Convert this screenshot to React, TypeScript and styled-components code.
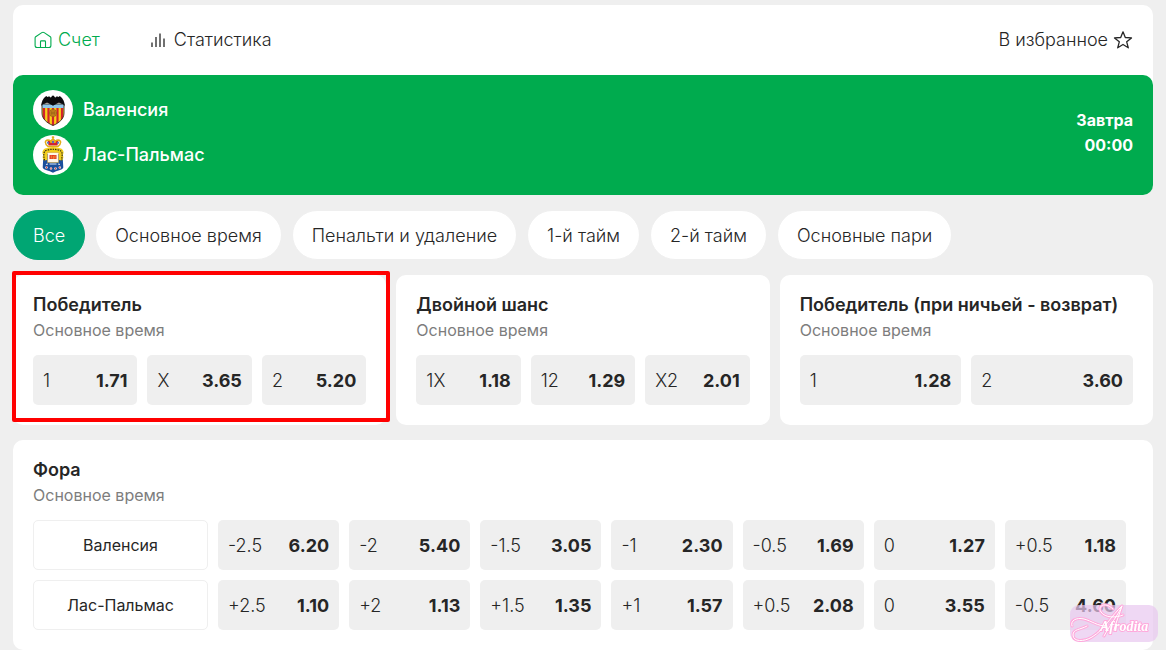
import React from "react";
import styled, { createGlobalStyle, css } from "styled-components";

const GlobalStyle = createGlobalStyle`
  *, *::before, *::after { box-sizing: border-box; }
  body {
    margin: 0;
    background: #efefef;
    color: #262626;
    font-family: Inter, "Liberation Sans", sans-serif;
    font-size: 18px;
    font-weight: 300;
    line-height: 20px;
  }
  button { font: inherit; color: inherit; border: 0; cursor: pointer; }
  h2, p { margin: 0; }
`;

const Page = styled.main`
  display: flex;
  flex-direction: column;
  gap: 15px;
  padding: 5px 13px 0;
`;

const EventPanel = styled.section`
  background: #fff;
  border-radius: 10px;
`;

const EventNav = styled.nav`
  display: flex;
  align-items: center;
  gap: 50px;
  height: 70px;
  padding: 0 20px;
`;

const NavLink = styled.a<{ $active?: boolean }>`
  display: flex;
  align-items: center;
  gap: 6px;
  color: ${(p) => (p.$active ? "#00ab4e" : "inherit")};
  text-decoration: none;
`;

const FavouriteButton = styled.button`
  display: flex;
  align-items: center;
  gap: 5px;
  margin-left: auto;
  padding: 0;
  background: none;
`;

const Scoreboard = styled.div`
  display: flex;
  align-items: center;
  justify-content: space-between;
  padding: 15px 20px 20px;
  border-radius: 10px;
  background: #00ab4e;
  color: #fff;
`;

const Teams = styled.div`
  display: flex;
  flex-direction: column;
  gap: 5px;
`;

const Team = styled.div`
  display: flex;
  align-items: center;
  gap: 10px;
  font-weight: 500;
`;

const Crest = styled.svg`
  width: 40px;
  height: 40px;
  border-radius: 50%;
  background: #fff;
`;

const StartTime = styled.time`
  display: flex;
  flex-direction: column;
  font-size: 16px;
  font-weight: 700;
  line-height: 25px;
  text-align: right;
`;

const Filters = styled.div`
  display: flex;
  gap: 10px;
`;

const FilterButton = styled.button<{ $active?: boolean }>`
  height: 50px;
  padding: 2px 19px 0;
  border: 1px solid ${(p) => (p.$active ? "#00a673" : "#efefef")};
  border-radius: 25px;
  background: ${(p) => (p.$active ? "#00a673" : "#fff")};
  color: ${(p) => (p.$active ? "#fff" : "inherit")};
  white-space: nowrap;
`;

const MarketGrid = styled.div`
  display: grid;
  grid-template-columns: repeat(3, minmax(0, 1fr));
  gap: 10px;
`;

const Market = styled.section<{ $highlighted?: boolean }>`
  position: relative;
  padding: 20px;
  border-radius: 10px;
  background: #fff;

  ${(p) =>
    p.$highlighted &&
    css`
      &::after {
        content: "";
        position: absolute;
        inset: -4px -4px 3px -1px;
        border: 4px solid #ff0000;
        border-radius: 2px;
        pointer-events: none;
      }
    `}
`;

const MarketTitle = styled.h2`
  font-size: 18px;
  font-weight: 600;
  line-height: 20px;
`;

const MarketPeriod = styled.p`
  margin: 5px 0 15px;
  color: #7d7d7d;
  font-size: 16px;
  font-weight: 400;
`;

const Odds = styled.div`
  display: grid;
  grid-auto-flow: column;
  grid-auto-columns: minmax(0, 1fr);
  gap: 10px;
`;

const OddButton = styled.button`
  display: flex;
  align-items: center;
  justify-content: space-between;
  height: 50px;
  padding: 2px 10px 0;
  border-radius: 5px;
  background: #efefef;
`;

const OddValue = styled.span`
  font-weight: 700;
`;

const HandicapRows = styled.div`
  display: flex;
  flex-direction: column;
  gap: 10px;
  padding-right: 7px;
`;

const HandicapRow = styled.div`
  display: grid;
  grid-template-columns: 175px 1fr;
  gap: 10px;
`;

const HandicapTeam = styled.div`
  display: flex;
  align-items: center;
  justify-content: center;
  border: 1px solid #efefef;
  border-radius: 5px;
  font-size: 16px;
  font-weight: 400;
`;

const Watermark = styled.div`
  position: fixed;
  right: 8px;
  bottom: 8px;
  width: 88px;
  height: 37px;
  border-radius: 9px;
  background: rgba(232, 200, 240, 0.7);
  pointer-events: none;

  svg {
    display: block;
    overflow: visible;
  }
`;

type Odd = [label: string, value: string];

const filters = ["Все", "Основное время", "Пенальти и удаление", "1-й тайм", "2-й тайм", "Основные пари"];

const markets: { title: string; odds: Odd[]; highlighted?: boolean }[] = [
  { title: "Победитель", odds: [["1", "1.71"], ["X", "3.65"], ["2", "5.20"]], highlighted: true },
  { title: "Двойной шанс", odds: [["1X", "1.18"], ["12", "1.29"], ["X2", "2.01"]] },
  { title: "Победитель (при ничьей - возврат)", odds: [["1", "1.28"], ["2", "3.60"]] },
];

const handicaps: { team: string; odds: Odd[] }[] = [
  {
    team: "Валенсия",
    odds: [["-2.5", "6.20"], ["-2", "5.40"], ["-1.5", "3.05"], ["-1", "2.30"], ["-0.5", "1.69"], ["0", "1.27"], ["+0.5", "1.18"]],
  },
  {
    team: "Лас-Пальмас",
    odds: [["+2.5", "1.10"], ["+2", "1.13"], ["+1.5", "1.35"], ["+1", "1.57"], ["+0.5", "2.08"], ["0", "3.55"], ["-0.5", "4.60"]],
  },
];

const HomeIcon = () => (
  <svg width="19" height="18" viewBox="-1 0 19 18" fill="none" stroke="currentColor" strokeWidth="1.1" strokeLinejoin="round" aria-hidden="true">
    <path d="M1.7 5.700 7.800 1.600a2.200 2.200 0 0 1 2.400 0l6.100 4.100q.6.500.6 1.300v7.500a2 2 0 0 1-2 2H3.100a2 2 0 0 1-2-2V7q0-.8.6-1.300Z" />
    <path d="M6.500 16.400v-5.700q0-.8.8-.8h3.400q.8 0 .8.8v5.700" />
  </svg>
);

const StatsIcon = () => (
  <svg width="18" height="18" viewBox="0 0 18 18" fill="none" stroke="currentColor" strokeWidth="1.300" aria-hidden="true">
    <path d="M2 11.500v4.500M6 6v10M10 2.500V16M14 7.500V16" />
  </svg>
);

const StarIcon = () => (
  <svg width="20" height="20" viewBox="0 0 20 20" fill="none" stroke="currentColor" strokeWidth="1.300" strokeLinejoin="round" aria-hidden="true">
    <path d="m10 1.800 2.300 5.700 6.200.4-4.800 3.900 1.600 6-5.300-3.300-5.300 3.300 1.600-6L1.500 7.900l6.200-.4Z" />
  </svg>
);

const ValenciaCrest = () => (
  <Crest viewBox="0 0 40 40" aria-hidden="true">
    <defs>
      <clipPath id="valencia-shield">
        <path d="M9 14h22v9c0 6-5 10-11 12.500C14 33 9 29 9 23Z" />
      </clipPath>
    </defs>
    <g clipPath="url(#valencia-shield)">
      <path fill="#f8cf17" d="M9 14h22v22H9z" />
      <path stroke="#d3222c" strokeWidth="2.200" d="M11 17v19M15.500 17v19M20 17v19M24.500 17v19M29 17v19" />
      <path fill="#8fc7ea" d="M9 14h22v4H9z" />
    </g>
    <path fill="none" stroke="#3b2a20" strokeWidth=".9" d="M9 14h22v9c0 6-5 10-11 12.500C14 33 9 29 9 23Z" />
    <circle cx="20" cy="23" r="3.700" fill="#d18a1f" stroke="#8d5a14" strokeWidth=".6" />
    <path fill="none" stroke="#8d5a14" strokeWidth=".6" d="M16.500 23h7M20 19.500v7M17.800 20.300q2.200 2.700 0 5.400M22.200 20.300q-2.200 2.700 0 5.400" />
    <path
      fill="#0c0c0e"
      d="M8.200 16.500c0-4.500 1.600-8.300 5-10.500l1.300 1 1.700-.8 1.200 1.300 1.100-.5.600-1.700.6.700h.6l.6-.7.600 1.700 1.100.5 1.200-1.300 1.700.8 1.300-1c3.400 2.200 5 6 5 10.500-.8-2-2-3-3.600-2.800-1.300-1.200-3-1.200-4.200-.2L20 15.800l-4-2.300c-1.200-1-2.900-1-4.200.2-1.600-.2-2.800.8-3.600 2.800Z"
    />
  </Crest>
);

const LasPalmasCrest = () => (
  <Crest viewBox="0 0 40 40" aria-hidden="true">
    <path fill="#d4202f" d="M14.500 5.500h11l-1 5h-9Z" />
    <path fill="none" stroke="#e2ad18" strokeWidth="1.500" d="M15 11.500c-3.500-3-3.500-6 0-6.500 2 0 3 1 3.200 3 0-2 .6-3.800 1.800-3.800S21.800 6 21.800 8c.2-2 1.200-3 3.200-3 3.500.5 3.500 3.500 0 6.500ZM20 4V1.200M18.800 2.300h2.400" />
    <g fill="#4d78c9">
      <circle cx="15" cy="7.800" r="1.100" />
      <circle cx="20" cy="7.200" r="1.100" />
      <circle cx="25" cy="7.800" r="1.100" />
    </g>
    <path fill="#1b4f9c" d="M10.500 19h19l.8 13.500c-1 3.200-6.300 2.500-10.300 5.300-4-2.800-9.300-2.100-10.300-5.300Z" />
    <path fill="#f2ce1c" d="M12 13.500q8-3 16 0c2.500 1.200 3.300 4 1.800 6.500 1 2 .5 4-.8 5.500l-3-.5v-7H14v7l-3 .5c-1.300-1.500-1.800-3.500-.8-5.500-1.500-2.500-.7-5.300 1.800-6.500Z" />
    <path stroke="#352f16" strokeWidth="1.200" strokeDasharray="1.500 1" fill="none" d="M11.500 25.500c-1-6-1.500-9.500 3-10.500 4-1 7-1 11 0 4.500 1 4 4.500 3 10.500" />
    <path fill="#fff7e8" stroke="#ca9a29" strokeWidth=".5" d="M14.500 17.500h11v10h-11z" />
    <path fill="#e53428" d="M16.500 20h7v4h-7z" />
    <path stroke="#f4bd38" strokeWidth=".7" d="M18.300 20.500v3M20.300 21v3M22 20.500v3" />
    <path fill="none" stroke="#dce8f6" strokeWidth="1.100" d="m13 29.500 2-.5M16.500 29h7M25 29l2 .5" />
    <g fill="#f1f1ed">
      <circle cx="13.500" cy="32.500" r="1.200" />
      <circle cx="18" cy="33.500" r="1.200" />
      <circle cx="22.500" cy="33.500" r="1.200" />
      <circle cx="26.800" cy="32.500" r="1.200" />
    </g>
    <path stroke="#d5373b" strokeWidth=".9" d="M13.500 31.500v2M18 32.500v2M22.500 32.500v2M26.800 31.500v2" />
  </Crest>
);

const crests = [ValenciaCrest, LasPalmasCrest];

const OddsRow = ({ odds }: { odds: Odd[] }) => (
  <Odds>
    {odds.map(([label, value]) => (
      <OddButton key={label} type="button">
        <span>{label}</span>
        <OddValue>{value}</OddValue>
      </OddButton>
    ))}
  </Odds>
);

const swashes =
  "M2 21C0 16 6 12 14 14C22 16 27 21 36 21M17 21C10 25 3 24 3 30C3 37 14 37 22 32C34 25 42 10 52 1C48 10 40 20 34 31M52 1C50 8 46 17 44 25M43 4C35-4 27 1 31 7C35 13 46 13 53 10";

export default function App() {
  return (
    <>
      <GlobalStyle />
      <Page>
        <EventPanel>
          <EventNav>
            <NavLink href="#score" $active>
              <HomeIcon />
              Счет
            </NavLink>
            <NavLink href="#stats">
              <StatsIcon />
              Статистика
            </NavLink>
            <FavouriteButton type="button">
              В избранное
              <StarIcon />
            </FavouriteButton>
          </EventNav>
          <Scoreboard>
            <Teams>
              {handicaps.map(({ team }, i) => {
                const TeamCrest = crests[i];
                return (
                  <Team key={team}>
                    <TeamCrest />
                    {team}
                  </Team>
                );
              })}
            </Teams>
            <StartTime>
              <span>Завтра</span>
              <span>00:00</span>
            </StartTime>
          </Scoreboard>
        </EventPanel>

        <Filters>
          {filters.map((name, i) => (
            <FilterButton key={name} type="button" $active={i === 0}>
              {name}
            </FilterButton>
          ))}
        </Filters>

        <MarketGrid>
          {markets.map(({ title, odds, highlighted }) => (
            <Market key={title} $highlighted={highlighted}>
              <MarketTitle>{title}</MarketTitle>
              <MarketPeriod>Основное время</MarketPeriod>
              <OddsRow odds={odds} />
            </Market>
          ))}
        </MarketGrid>

        <Market>
          <MarketTitle>Фора</MarketTitle>
          <MarketPeriod>Основное время</MarketPeriod>
          <HandicapRows>
            {handicaps.map(({ team, odds }) => (
              <HandicapRow key={team}>
                <HandicapTeam>{team}</HandicapTeam>
                <OddsRow odds={odds} />
              </HandicapRow>
            ))}
          </HandicapRows>
        </Market>
      </Page>

      <Watermark>
        <svg width="88" height="37" viewBox="0 0 88 37" fill="none" strokeLinecap="round" strokeLinejoin="round">
          <path d={swashes} stroke="#ffa9dc" strokeWidth="3" />
          <text
            x="30"
            y="26"
            fill="#fff"
            stroke="#ffa9dc"
            strokeWidth="2"
            paintOrder="stroke"
            fontFamily="Liberation Serif, serif"
            fontStyle="italic"
            fontWeight="700"
            fontSize="14"
          >
            Afrodita
          </text>
          <path d={swashes} stroke="#fff" strokeWidth="1" />
        </svg>
      </Watermark>
    </>
  );
}
